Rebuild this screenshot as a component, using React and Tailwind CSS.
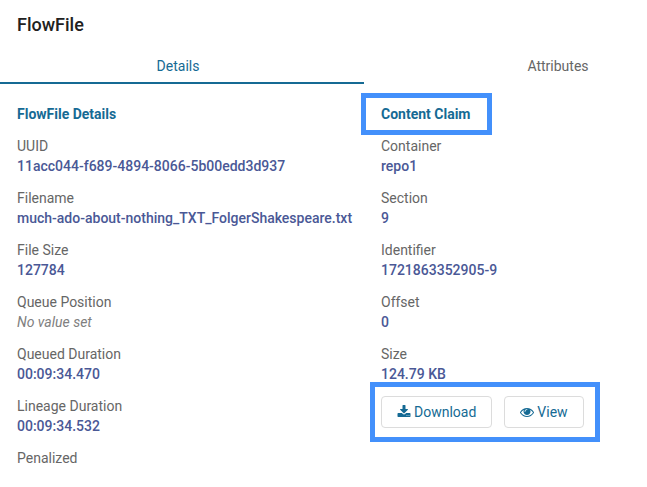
const flowFileDetails = [
  { label: 'UUID', value: '11acc044-f689-4894-8066-5b00edd3d937' },
  { label: 'Filename', value: 'much-ado-about-nothing_TXT_FolgerShakespeare.txt' },
  { label: 'File Size', value: '127784' },
  { label: 'Queue Position', value: null },
  { label: 'Queued Duration', value: '00:09:34.470' },
  { label: 'Lineage Duration', value: '00:09:34.532' },
  { label: 'Penalized' },
];

const contentClaim = [
  { label: 'Container', value: 'repo1' },
  { label: 'Section', value: '9' },
  { label: 'Identifier', value: '1721863352905-9' },
  { label: 'Offset', value: '0' },
  { label: 'Size', value: '124.79 KB' },
];

function DownloadIcon() {
  return (
    <svg className="size-3.5 shrink-0" viewBox="0 0 1792 1792" fill="currentColor" aria-hidden="true">
      <path d="M1344 1344q0-26-19-45t-45-19-45 19-19 45 19 45 45 19 45-19 19-45zm256 0q0-26-19-45t-45-19-45 19-19 45 19 45 45 19 45-19 19-45zm128-224v320q0 40-28 68t-68 28h-1472q-40 0-68-28t-28-68v-320q0-40 28-68t68-28h465l135 136q58 56 136 56t136-56l136-136h464q40 0 68 28t28 68zm-325-569q17 41-14 70l-448 448q-18 19-45 19t-45-19l-448-448q-31-29-14-70 17-39 59-39h256v-448q0-26 19-45t45-19h256q26 0 45 19t19 45v448h256q42 0 59 39z" />
    </svg>
  );
}

function EyeIcon() {
  return (
    <svg className="size-3.5 shrink-0" viewBox="0 0 1792 1792" fill="currentColor" aria-hidden="true">
      <path d="M1664 960q-152-236-381-353 61 104 61 225 0 185-131.5 316.5t-316.5 131.5-316.5-131.5-131.5-316.5q0-121 61-225-229 117-381 353 133 205 333.5 326.5t434.5 121.5 434.5-121.5 333.5-326.5zm-720-384q0-20-14-34t-34-14q-125 0-214.5 89.5t-89.5 214.5q0 20 14 34t34 14 34-14 14-34q0-86 61-147t147-61q20 0 34-14t14-34zm848 384q0 34-20 69-140 230-376.5 368.5t-499.5 138.5-499.5-139-376.5-368q-20-35-20-69t20-69q140-229 376.5-368t499.5-139 499.5 139 376.5 368q20 35 20 69z" />
    </svg>
  );
}

function Field({ label, value }) {
  return (
    <div>
      <dt className="text-[#666666]">{label}</dt>
      {value === null && <dd className="text-[#808080] italic">No value set</dd>}
      {value && <dd className="font-medium whitespace-nowrap text-[#4a5896]">{value}</dd>}
    </div>
  );
}

function FieldList({ fields }) {
  return (
    <dl className="flex flex-col gap-3">
      {fields.map((field) => (
        <Field key={field.label} {...field} />
      ))}
    </dl>
  );
}

function ActionButton({ icon, children }) {
  return (
    <button
      type="button"
      className="flex h-8 items-center gap-[3px] rounded border border-[#dcdcdc] px-[15px] text-[#156a94]"
    >
      {icon}
      {children}
    </button>
  );
}

export default function App() {
  return (
    <main className="overflow-hidden bg-white font-['Roboto',sans-serif] text-sm leading-5">
      <h1 className="px-[17px] pt-[13px] pb-[11px] text-lg leading-6 font-medium text-[#212121]">FlowFile</h1>

      <div role="tablist" className="grid grid-cols-[364fr_283fr]">
        <button
          type="button"
          role="tab"
          aria-selected="true"
          className="h-9 border-b-2 border-[#156a94] pt-0.5 pr-2 text-[#156a94]"
        >
          Details
        </button>
        <button
          type="button"
          role="tab"
          aria-selected="false"
          className="h-9 border-b-2 border-transparent pt-0.5 pl-[105px] text-[#666666]"
        >
          Attributes
        </button>
      </div>

      <div className="grid grid-cols-[364fr_283fr] pt-5">
        <section className="flex min-w-0 flex-col gap-3 pl-[17px]">
          <h2 className="font-bold text-[#156a94]">FlowFile Details</h2>
          <FieldList fields={flowFileDetails} />
        </section>

        <section className="flex min-w-0 flex-col items-start gap-3 pl-[17px]">
          <div className="relative">
            <h2 className="font-bold text-[#156a94]">Content Claim</h2>
            <div className="pointer-events-none absolute -inset-y-[11px] -right-[22px] -left-5 border-5 border-[#4390fb]" />
          </div>
          <FieldList fields={contentClaim} />
          <div className="relative flex gap-3">
            <ActionButton icon={<DownloadIcon />}>Download</ActionButton>
            <ActionButton icon={<EyeIcon />}>View</ActionButton>
            <div className="pointer-events-none absolute -top-3.5 -right-4 -bottom-3.5 -left-[11px] border-5 border-[#4390fb]" />
          </div>
        </section>
      </div>
    </main>
  );
}
